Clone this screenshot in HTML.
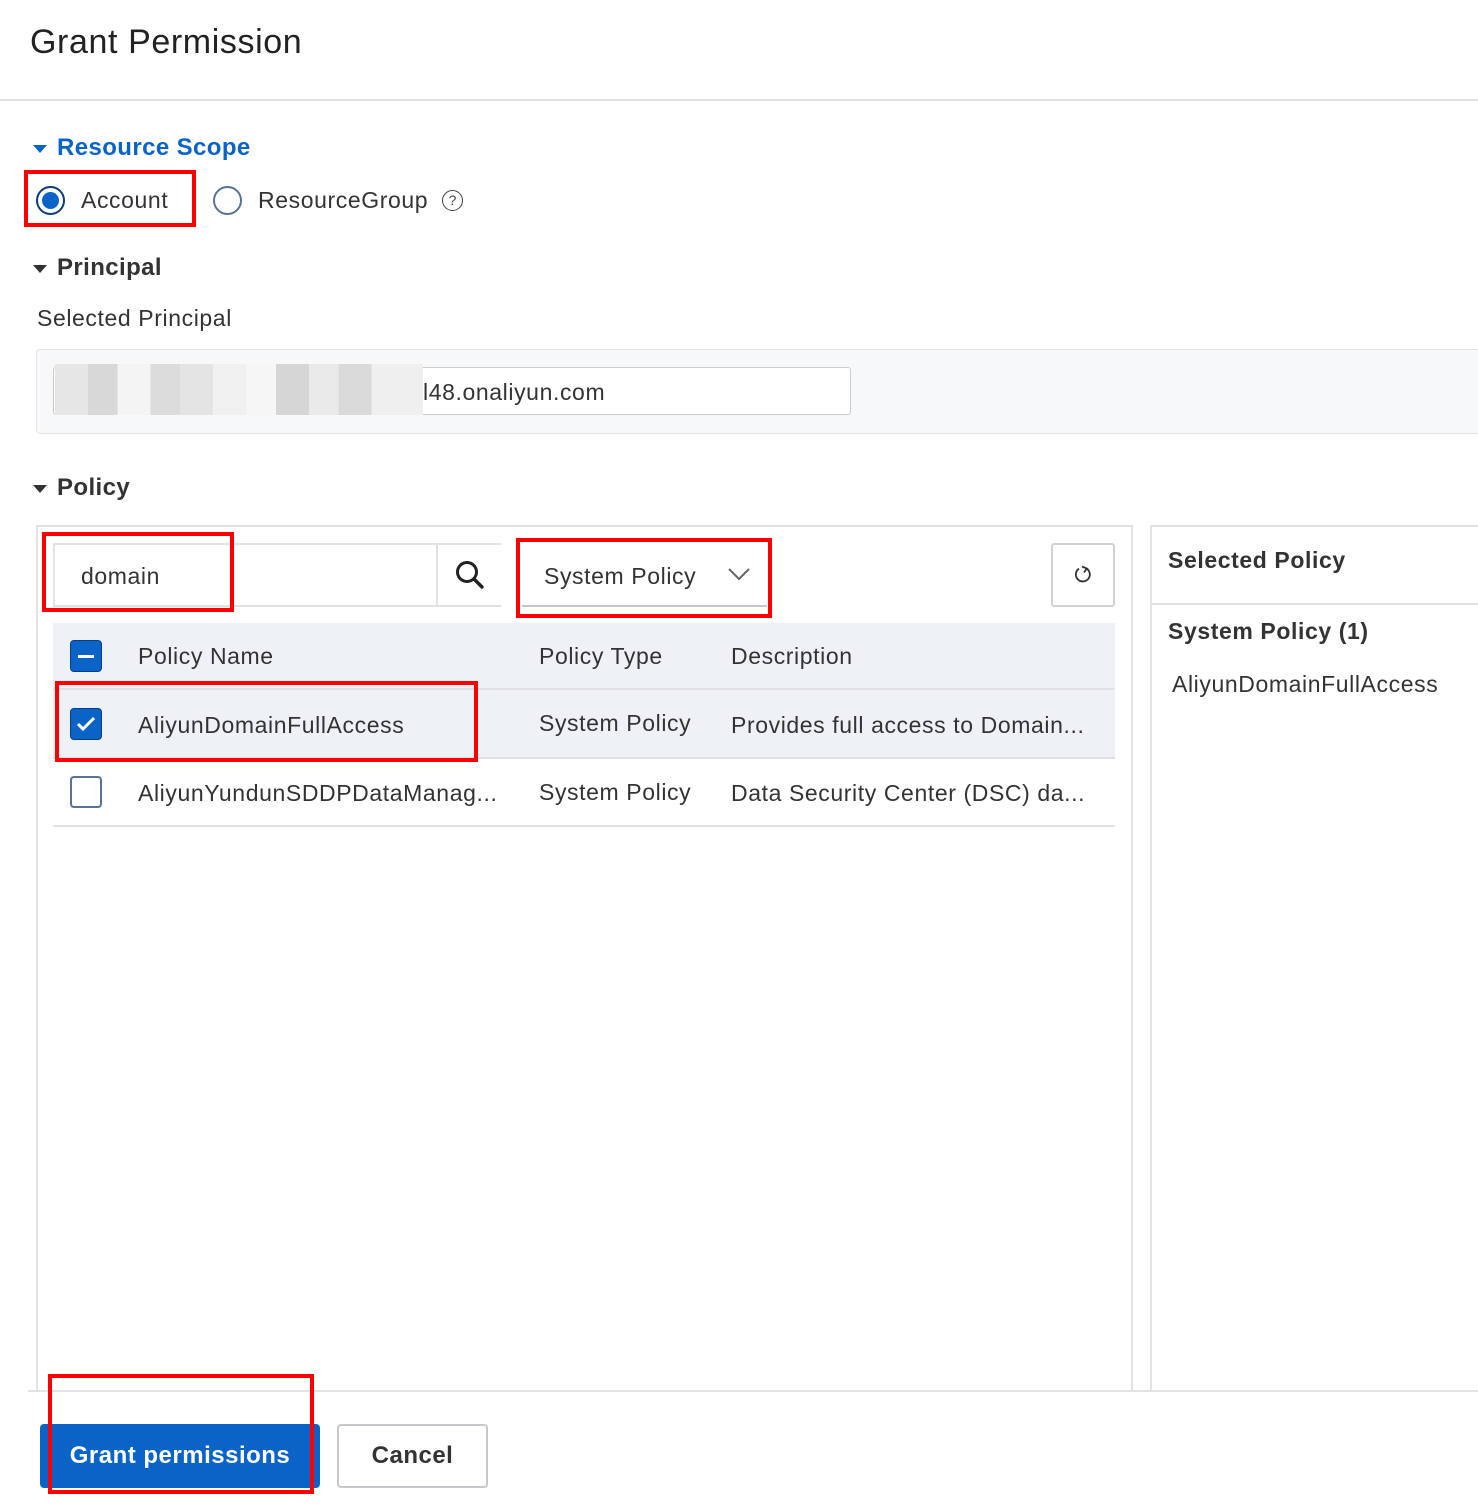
<!DOCTYPE html>
<html><head><meta charset="utf-8"><style>
*{margin:0;padding:0;box-sizing:border-box}
body{width:1478px;height:1510px;background:#fff;font-family:"Liberation Sans",sans-serif;color:#333;position:relative;overflow:hidden}
.a{position:absolute;white-space:nowrap}
.t{font-size:23px;line-height:30px;letter-spacing:0.6px}
.b{font-weight:bold}
.red{position:absolute;border:4px solid #f00}
.tri{position:absolute;width:0;height:0;border-left:7px solid transparent;border-right:7px solid transparent;border-top:8px solid #333}
.cb{position:absolute;width:32px;height:32px;border-radius:4px}
</style></head><body>
<div class="a" style="left:30px;top:22px;font-size:34px;line-height:40px;color:#222;letter-spacing:0.6px">Grant Permission</div>
<div class="a" style="left:0;top:99px;width:1478px;height:2px;background:#e3e3e3"></div>

<div class="tri" style="left:33px;top:145px;border-top-color:#0a64c8"></div>
<div class="a t b" style="left:57px;top:133px;color:#0a64c8;font-size:24px;letter-spacing:0.4px">Resource Scope</div>
<div class="a" style="left:36px;top:186px;width:29px;height:29px;border:2px solid #0d3a78;border-radius:50%"></div>
<div class="a" style="left:42px;top:192px;width:17px;height:17px;background:#0a64c8;border-radius:50%"></div>
<div class="a t" style="left:81px;top:185px">Account</div>
<div class="red" style="left:24px;top:170px;width:172px;height:57px"></div>
<div class="a" style="left:213px;top:186px;width:29px;height:29px;border:2px solid #5a7394;border-radius:50%"></div>
<div class="a t" style="left:258px;top:185px">ResourceGroup</div>
<div class="a" style="left:442px;top:190px;width:21px;height:21px;border:1.5px solid #444;border-radius:50%;font-size:14px;line-height:18px;text-align:center;color:#444">?</div>

<div class="tri" style="left:33px;top:265px"></div>
<div class="a t b" style="left:57px;top:253px;font-size:24px;letter-spacing:0.4px">Principal</div>
<div class="a t" style="left:37px;top:303px">Selected Principal</div>
<div class="a" style="left:36px;top:349px;width:1460px;height:85px;background:#f7f8fa;border:1px solid #e3e5e8;border-radius:4px"></div>
<div class="a" style="left:53px;top:367px;width:798px;height:48px;background:#fff;border:1.5px solid #ccc;border-radius:3px"></div>
<div class="a" style="left:55px;top:364px;width:368px;height:51px;background:linear-gradient(90deg,#e6e6e6 0 9%,#d8d8d8 9% 17%,#f4f4f4 17% 26%,#dcdcdc 26% 34%,#e4e4e4 34% 43%,#f0f0f0 43% 52%,#f6f6f6 52% 60%,#d6d6d6 60% 69%,#eaeaea 69% 77%,#dadada 77% 86%,#efefef 86%)"></div>
<div class="a t" style="left:423px;top:377px">l48.onaliyun.com</div>

<div class="tri" style="left:33px;top:485px"></div>
<div class="a t b" style="left:57px;top:473px;font-size:24px;letter-spacing:0.4px">Policy</div>

<div class="a" style="left:36px;top:525px;width:1097px;height:866px;border:2px solid #e3e3e3;border-bottom:none"></div>
<div class="a" style="left:1150px;top:525px;width:340px;height:866px;border:2px solid #e3e3e3;border-bottom:none"></div>
<div class="a" style="left:1150px;top:603px;width:328px;height:2px;background:#e3e3e3"></div>
<div class="a t b" style="left:1168px;top:545px">Selected Policy</div>
<div class="a t b" style="left:1168px;top:616px">System Policy (1)</div>
<div class="a t" style="left:1172px;top:669px">AliyunDomainFullAccess</div>

<div class="a" style="left:53px;top:543px;width:448px;height:64px;border:2px solid #e3e3e3;border-right:none"></div>
<div class="a" style="left:436px;top:545px;width:2px;height:60px;background:#e3e3e3"></div>
<svg class="a" style="left:454px;top:559px" width="32" height="32" viewBox="0 0 32 32"><circle cx="13" cy="13" r="9.5" fill="none" stroke="#222" stroke-width="3"/><path d="M20 20l8 8" stroke="#222" stroke-width="3.4" stroke-linecap="round"/></svg>
<div class="a t" style="left:81px;top:561px">domain</div>
<div class="red" style="left:42px;top:532px;width:192px;height:80px"></div>

<div class="a" style="left:522px;top:543px;width:245px;height:64px;border-bottom:2px solid #c4c6cc"></div>
<div class="a t" style="left:544px;top:561px">System Policy</div>
<svg class="a" style="left:727px;top:566px" width="24" height="16" viewBox="0 0 24 16"><path d="M2 3l10 10 10-10" fill="none" stroke="#666" stroke-width="2"/></svg>
<div class="red" style="left:516px;top:538px;width:256px;height:80px"></div>

<div class="a" style="left:1051px;top:543px;width:64px;height:64px;border:2px solid #d0d2d6;border-radius:3px"></div>
<svg class="a" style="left:1072px;top:564px" width="22" height="22" viewBox="0 0 22 22"><path d="M14.5 4.5A7 7 0 1 1 7 4.6" fill="none" stroke="#333" stroke-width="1.8"/><path d="M10 2.5l4.8 2-2.8 4" fill="none" stroke="#333" stroke-width="1.8"/></svg>

<div class="a" style="left:53px;top:623px;width:1062px;height:135px;background:#eef1f6"></div>
<div class="a" style="left:53px;top:688px;width:1062px;height:2px;background:#dfe1e6"></div>
<div class="a" style="left:53px;top:757px;width:1062px;height:2px;background:#dfe1e6"></div>
<div class="a" style="left:53px;top:825px;width:1062px;height:2px;background:#e3e3e3"></div>
<div class="cb" style="left:70px;top:640px;background:#0a64c8;border:1px solid #0b3d86"><div class="a" style="left:7px;top:14px;width:16px;height:3px;background:#fff"></div></div>
<div class="cb" style="left:70px;top:708px;background:#0a64c8;border:1px solid #0b3d86"><svg class="a" style="left:4px;top:5px" width="22" height="20" viewBox="0 0 22 20"><path d="M3 10l5 5 11-11" fill="none" stroke="#fff" stroke-width="3"/></svg></div>
<div class="cb" style="left:70px;top:776px;border:2px solid #5a7394"></div>
<div class="a t" style="left:138px;top:641px">Policy Name</div>
<div class="a t" style="left:539px;top:641px">Policy Type</div>
<div class="a t" style="left:731px;top:641px">Description</div>
<div class="a t" style="left:138px;top:710px">AliyunDomainFullAccess</div>
<div class="a t" style="left:539px;top:708px">System Policy</div>
<div class="a t" style="left:731px;top:710px">Provides full access to Domain...</div>
<div class="a t" style="left:138px;top:778px">AliyunYundunSDDPDataManag...</div>
<div class="a t" style="left:539px;top:777px">System Policy</div>
<div class="a t" style="left:731px;top:778px">Data Security Center (DSC) da...</div>
<div class="red" style="left:55px;top:681px;width:423px;height:81px"></div>

<div class="a" style="left:28px;top:1390px;width:1450px;height:2px;background:#e3e3e3"></div>
<div class="a b" style="left:40px;top:1424px;width:280px;height:64px;background:#0a64c8;border-radius:4px;color:#fff;font-size:24px;line-height:64px;text-align:center;letter-spacing:0.5px">Grant permissions</div>
<div class="a b" style="left:337px;top:1424px;width:151px;height:64px;border:2px solid #c6c8cc;border-radius:4px;color:#333;font-size:24px;line-height:60px;text-align:center;letter-spacing:0.5px">Cancel</div>
<div class="red" style="left:48px;top:1374px;width:266px;height:120px"></div>
</body></html>
